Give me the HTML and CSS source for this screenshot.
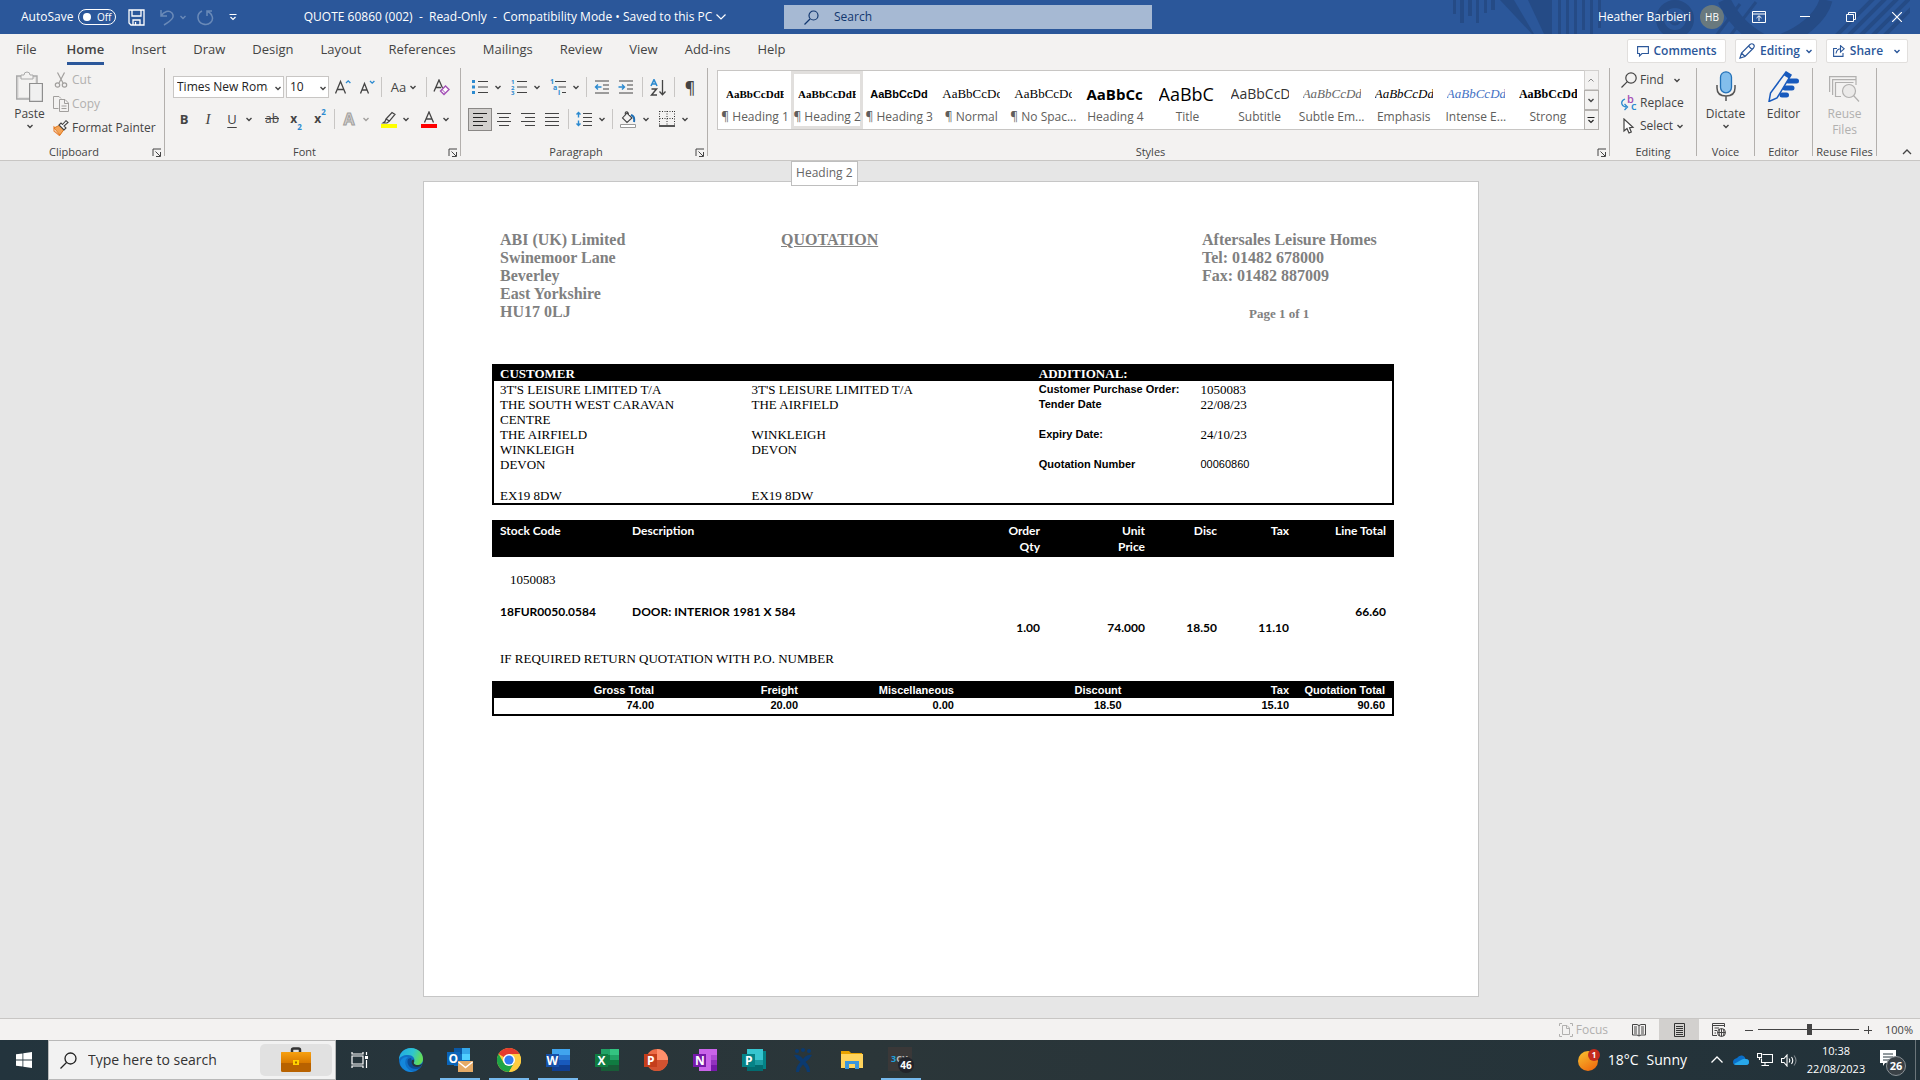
FILE: index.html
```html
<!DOCTYPE html>
<html lang="en">
<head>
    <meta charset="UTF-8">
    <meta name="viewport" content="width=device-width, initial-scale=1.0">
    <title>QUOTE 60860 (002) - Word</title>
    <link rel="stylesheet" href="styles.css">
</head>
<body>
    <svg class="defs" aria-hidden="true">
        <symbol id="chev" viewBox="0 0 8 8"><path d="M1.5 3L4 5.5L6.5 3" fill="none" stroke="currentColor" stroke-width="1.4"/></symbol>
        <symbol id="launch" viewBox="0 0 10 10"><path d="M1 8V1H9M3.500 3.500L8 8M8.500 4V8.500H4" fill="none" stroke="currentColor"/></symbol>
    </svg>

    <!-- Title bar -->
    <header class="titlebar">
        <svg class="titlebar-art" width="480" height="34" viewBox="0 0 480 34" aria-hidden="true">
            <g fill="#254b86">
                <path d="M23 0h3v14h-3zM30 0h4v23h-4zM38 0h4v16h-4zM46 0h3v23h-3zM54 0h3v13h-3zM61 0h4v10h-4z"/>
                <path d="M70 0h14l20 34h-2z"/>
                <path d="M98 0h24v34h-8z"/>
                <path d="M128 0h3v34h-3zM136 0h3v34h-3zM144 0h3v34h-3zM152 0h3v30h-3zM160 0h3v34h-3zM168 0h3v28h-3z"/>
            </g>
            <g fill="none" stroke="#254b86">
                <circle cx="245" cy="19" r="15" stroke-width="8"/>
                <circle cx="245" cy="19" r="5" stroke-width="3"/>
                <path d="M294 0C304 22 322 36 340 44C372 36 392 16 396 0" stroke-width="13"/>
                <path d="M286 36L310 4M300 36L326 2" stroke-width="3"/>
                <path d="M404 38L446 -4M416 38L458 -4M428 38L470 -4M440 38L482 -4M452 38L494 -4" stroke-width="4"/>
            </g>
        </svg>
        <div class="quick">
            <label class="autosave">AutoSave
                <input type="checkbox" class="toggle-input">
                <span class="toggle"><i></i>Off</span>
            </label>
            <button class="tb-btn save" aria-label="Save"><svg width="17" height="17" viewBox="0 0 17 17" fill="none" stroke="#fff" stroke-width="1.300"><path d="M1 1H16V16H3L1 14Z"/><path d="M4 1V7H13V1M5 16V11H12V16M7.500 13V16"/></svg></button>
            <button class="tb-btn dim" aria-label="Undo"><svg width="16" height="17" viewBox="0 0 16 17" fill="none" stroke="currentColor" stroke-width="1.500"><path d="M2 1V7H8M2 7C5 2 10 1 13 4C16 8 13 11 5 16"/></svg></button>
            <button class="tb-caret dim" aria-label="Undo list"><svg width="8" height="8"><use href="#chev"/></svg></button>
            <button class="tb-btn dim" aria-label="Redo"><svg width="17" height="17" viewBox="0 0 17 17" fill="none" stroke="currentColor" stroke-width="1.500"><path d="M5 2C-1 5 0 13 6 15C12 17 17 12 15 7C14 4 12 3 10 2M10 7V2H15"/></svg></button>
            <button class="tb-btn" aria-label="Customize toolbar"><svg width="8" height="8" viewBox="0 0 8 8" fill="none" stroke="#fff" stroke-width="1.200"><path d="M0.500 1.500H7.500M1.500 4L4 6.500L6.500 4"/></svg></button>
        </div>
        <button class="doc-title">QUOTE 60860 (002) &nbsp;-&nbsp; Read-Only &nbsp;-&nbsp; Compatibility Mode • Saved to this PC
            <svg width="10" height="8" viewBox="0 0 10 8" fill="none" stroke="#fff" stroke-width="1.200"><path d="M0.500 1.500L5 6L9.500 1.500"/></svg>
        </button>
        <label class="search">
            <svg width="15" height="15" viewBox="0 0 15 15" fill="none" stroke="#12376f" stroke-width="1.200"><circle cx="9.500" cy="5.500" r="4.500"/><path d="M6 9L0.500 14.500"/></svg>
            <input type="text" placeholder="Search" aria-label="Search">
        </label>
        <div class="account">
            <span>Heather Barbieri</span>
            <span class="avatar">HB</span>
        </div>
        <div class="win-controls">
            <button aria-label="Ribbon display options"><svg width="14" height="12" viewBox="0 0 14 12" fill="none" stroke="#fff"><path d="M0.500 0.500H13.500V11.500H0.500ZM0.500 3H13.500M7 10V5M4.500 7L7 4.700L9.500 7"/></svg></button>
            <button aria-label="Minimize"><svg width="10" height="10"><path d="M0 4.500H10" stroke="#fff"/></svg></button>
            <button aria-label="Restore"><svg width="10" height="10" viewBox="0 0 10 10" fill="none" stroke="#fff"><path d="M0.500 2.500H7.500V9.500H0.500ZM2.500 2.500V0.500H9.500V7.500H7.500"/></svg></button>
            <button aria-label="Close"><svg width="10" height="10" viewBox="0 0 10 10" stroke="#fff" stroke-width="1.200"><path d="M0 0L10 10M10 0L0 10"/></svg></button>
        </div>
    </header>

    <!-- Ribbon tabs -->
    <nav class="tabs">
        <a href="#" class="file">File</a>
        <a href="#" class="active">Home</a>
        <a href="#">Insert</a>
        <a href="#">Draw</a>
        <a href="#">Design</a>
        <a href="#">Layout</a>
        <a href="#">References</a>
        <a href="#">Mailings</a>
        <a href="#">Review</a>
        <a href="#">View</a>
        <a href="#">Add-ins</a>
        <a href="#">Help</a>
        <div class="tab-actions">
            <button class="comments"><svg width="12" height="11" viewBox="0 0 12 11" fill="none" stroke="currentColor" stroke-width="1.100"><path d="M0.600 0.600H11.400V7.500H5L2.500 10V7.500H0.600Z"/></svg>Comments</button>
            <button><svg width="16" height="16" viewBox="0 0 16 16" fill="none" stroke="currentColor" stroke-width="1.200"><path d="M1 15L2.500 10L11 1.500Q13 0 14.500 1.500Q16 3 14.500 5L6 13.500ZM2.500 10L6 13.500M9.500 3L13 6.500"/></svg>Editing<svg width="8" height="8"><use href="#chev"/></svg></button>
            <button class="share"><svg width="12" height="12" viewBox="0 0 12 12" fill="none" stroke="currentColor" stroke-width="1.100"><path d="M4 3.500H0.600V11.400H10V8M3 8.500C3.500 5 5.500 3.800 8 3.800M7.500 0.700L11.200 3.800L7.500 7Z"/></svg>Share<svg class="push" width="8" height="8"><use href="#chev"/></svg></button>
        </div>
    </nav>

    <!-- Ribbon -->
    <div class="ribbon">
        <section class="group clipboard">
            <div class="group-body">
                <button class="big">
                    <svg width="27" height="31" viewBox="0 0 27 31" fill="none"><path d="M0.700 5H21V28H0.700Z" fill="#e3e2e1" stroke="#a9a9a9" stroke-width="1.400"/><path d="M3 7.500H19V26H3Z" fill="#f3f2f1"/><path d="M5 8V4H8Q8 1 11 1Q14 1 14 4H17V8Z" fill="#f3f2f1" stroke="#a9a9a9"/><path d="M13.600 12.500H26.400V30.400H13.600Z" fill="#f0f0f0" stroke="#8e8e8e" stroke-width="1.200"/></svg>
                    Paste
                    <svg width="8" height="8"><use href="#chev"/></svg>
                </button>
                <div class="stack clip-stack">
                    <button disabled><svg width="16" height="16" viewBox="0 0 16 16" fill="none" stroke="#a19f9d" stroke-width="1.200"><path d="M4.500 0.500L10 11M11.500 0.500L6 11"/><circle cx="4.500" cy="13" r="2.200"/><circle cx="11.500" cy="13" r="2.200"/></svg>Cut</button>
                    <button disabled><svg width="16" height="16" viewBox="0 0 16 16" fill="none" stroke="#a19f9d"><path d="M5.500 12.500H0.500V0.500H6L8 2.500M6.500 3.500H12L15.500 7V15.500H6.500ZM11.500 3.500V7.500H15.500M8.500 10H13.500M8.500 12.500H13.500"/></svg>Copy</button>
                    <button><svg width="16" height="16" viewBox="0 0 16 16" fill="none"><path d="M1 7L8 12.500L6.500 15.500L1 11Z" fill="#fff" stroke="#e8833a" stroke-width="1.200"/><path d="M1 8L7 5L11 9.500L7 15Z" fill="#f4a459" stroke="#e07b1f"/><path d="M6 5L11 10L13 8L11 6L15 2.500L13 0.700L9.500 4.500L8 3Z" fill="#fff" stroke="#444" stroke-width="1.100"/></svg>Format Painter</button>
                </div>
            </div>
            <footer>Clipboard<button class="launcher" aria-label="Clipboard options"><svg width="10" height="10"><use href="#launch"/></svg></button></footer>
        </section>

        <section class="group font">
            <div class="group-body rows">
                <div class="row">
                    <span class="combo font-name"><select aria-label="Font"><option>Times New Roman</option></select><svg width="8" height="8"><use href="#chev"/></svg></span>
                    <span class="combo font-size"><select aria-label="Font size"><option>10</option></select><svg width="8" height="8"><use href="#chev"/></svg></span>
                    <button class="ib grow" aria-label="Grow font"><svg width="16" height="16" viewBox="0 0 16 16" fill="none" stroke="#444" stroke-width="1.300"><path d="M0.500 14.500L5.500 2.500L10.500 14.500M2.200 10.500H8.800"/><path d="M11 4L13.200 1.800L15.400 4" stroke="#2b8ad0"/></svg></button>
                    <button class="ib" aria-label="Shrink font"><svg width="16" height="16" viewBox="0 0 16 16" fill="none" stroke="#444" stroke-width="1.300"><path d="M1.500 14.500L5.500 4.500L9.500 14.500M3 11H8"/><path d="M11 2L13.200 4.200L15.400 2" stroke="#2b8ad0"/></svg></button>
                    <i class="sep"></i>
                    <button class="case">Aa<svg width="8" height="8"><use href="#chev"/></svg></button>
                    <i class="sep"></i>
                    <button class="ib" aria-label="Clear formatting"><svg width="17" height="17" viewBox="0 0 17 17" fill="none"><path d="M1 12.500L6 1L9.500 9M2.800 8.500H8" stroke="#444" stroke-width="1.300"/><path d="M7.500 12L12.500 7L16 10.500L11 15.500Z" fill="#fff" stroke="#a34fb5" stroke-width="1.400"/><path d="M9 10.500L12.500 14" stroke="#a34fb5"/></svg></button>
                </div>
                <div class="row">
                    <button class="ib b">B</button>
                    <button class="ib i">I</button>
                    <button class="ib u">U</button>
                    <button class="cb" aria-label="Underline list"><svg width="8" height="8"><use href="#chev"/></svg></button>
                    <button class="ib s">ab</button>
                    <button class="ib x">x<sub>2</sub></button>
                    <button class="ib x">x<sup>2</sup></button>
                    <i class="sep"></i>
                    <button class="ib fx">A</button>
                    <button class="cb off" aria-label="Effects list"><svg width="8" height="8"><use href="#chev"/></svg></button>
                    <button class="ib" aria-label="Highlight"><svg width="16" height="17" viewBox="0 0 16 17" fill="none"><path d="M5 8L11 1.500L14 3.500L8.500 10ZM5 8L4 10.500L2 12H6L8.500 10" stroke="#444" stroke-width="1.200"/><path d="M0 13H16V17H0Z" fill="#ff0"/></svg></button>
                    <button class="cb" aria-label="Highlight list"><svg width="8" height="8"><use href="#chev"/></svg></button>
                    <button class="ib" aria-label="Font colour"><svg width="16" height="17" viewBox="0 0 16 17" fill="none"><path d="M3.500 11.500L8 1L12.500 11.500M5 8H11" stroke="#444" stroke-width="1.300"/><path d="M0 13H16V17H0Z" fill="#f00"/></svg></button>
                    <button class="cb" aria-label="Font colour list"><svg width="8" height="8"><use href="#chev"/></svg></button>
                </div>
            </div>
            <footer>Font<button class="launcher" aria-label="Font options"><svg width="10" height="10"><use href="#launch"/></svg></button></footer>
        </section>

        <section class="group paragraph">
            <div class="group-body rows">
                <div class="row">
                    <button class="ib" aria-label="Bullets"><svg width="16" height="16" viewBox="0 0 16 16"><path d="M0 1h3v3H0zM0 6.500h3v3H0zM0 12h3v3H0z" fill="#2b8ad0"/><path d="M6 2.500H16M6 8H16M6 13.500H16" stroke="#444"/></svg></button>
                    <button class="cb wide" aria-label="Bullets list"><svg width="8" height="8"><use href="#chev"/></svg></button>
                    <button class="ib" aria-label="Numbering"><svg width="16" height="16" viewBox="0 0 16 16"><g fill="#2b8ad0" font-family="Open Sans" font-weight="700" font-size="6"><text x="0" y="5">1</text><text x="0" y="10.500">2</text><text x="0" y="16">3</text></g><path d="M6 2.500H16M6 8H16M6 13.500H16" stroke="#444"/></svg></button>
                    <button class="cb wide" aria-label="Numbering list"><svg width="8" height="8"><use href="#chev"/></svg></button>
                    <button class="ib" aria-label="Multilevel list"><svg width="16" height="16" viewBox="0 0 16 16"><g fill="#2b8ad0" font-family="Open Sans" font-weight="700" font-size="7"><text x="0" y="5">1</text><text x="3" y="10.500">a</text><text x="8" y="16">i</text></g><path d="M5 2.500H16M8.500 8H16M12 13.500H16" stroke="#444"/></svg></button>
                    <button class="cb" aria-label="Multilevel styles"><svg width="8" height="8"><use href="#chev"/></svg></button>
                    <i class="sep"></i>
                    <button class="ib" aria-label="Decrease indent"><svg width="16" height="16" viewBox="0 0 16 16" fill="none" stroke="#444"><path d="M1 2H15M9 6H15M9 10H15M1 14H15"/><path d="M7.500 8H1.500M4 5.500L1.500 8L4 10.500" stroke="#2b8ad0" stroke-width="1.400"/></svg></button>
                    <button class="ib" aria-label="Increase indent"><svg width="16" height="16" viewBox="0 0 16 16" fill="none" stroke="#444"><path d="M1 2H15M9 6H15M9 10H15M1 14H15"/><path d="M0.500 8H6.500M4 5.500L6.500 8L4 10.500" stroke="#2b8ad0" stroke-width="1.400"/></svg></button>
                    <i class="sep"></i>
                    <button class="ib" aria-label="Sort"><svg width="17" height="17" viewBox="0 0 17 17" fill="none"><path d="M1 7L4 0.700L7 7M2 5H6" stroke="#2b8ad0" stroke-width="1.600"/><path d="M1.500 10H6.500L1.500 16H7" stroke="#444" stroke-width="1.500"/><path d="M12.500 1V15.500M9.500 12.500L12.500 15.700L15.500 12.500" stroke="#444" stroke-width="1.300"/></svg></button>
                    <i class="sep"></i>
                    <button class="ib pilcrow">¶</button>
                </div>
                <div class="row">
                    <button class="ib pressed" aria-label="Align left"><svg width="14" height="14" stroke="#222"><path d="M0 1.500H14M0 5.500H10M0 9.500H14M0 13.500H10"/></svg></button>
                    <button class="ib" aria-label="Centre"><svg width="14" height="14" stroke="#444"><path d="M0 1.500H14M2 5.500H12M0 9.500H14M2 13.500H12"/></svg></button>
                    <button class="ib" aria-label="Align right"><svg width="14" height="14" stroke="#444"><path d="M0 1.500H14M4 5.500H14M0 9.500H14M4 13.500H14"/></svg></button>
                    <button class="ib" aria-label="Justify"><svg width="14" height="14" stroke="#444"><path d="M0 1.500H14M0 5.500H14M0 9.500H14M0 13.500H14"/></svg></button>
                    <i class="sep"></i>
                    <button class="ib" aria-label="Line spacing"><svg width="16" height="16" viewBox="0 0 16 16" fill="none" stroke="#444"><path d="M7 2.500H16M7 6.500H16M7 10.500H16M7 14.500H16"/><path d="M2.500 1.500V6.500M2.500 9.500V14.500M0.500 3.500L2.500 1.500L4.500 3.500M0.500 12.500L2.500 14.500L4.500 12.500" stroke="#2b8ad0" stroke-width="1.400"/></svg></button>
                    <button class="cb" aria-label="Spacing list"><svg width="8" height="8"><use href="#chev"/></svg></button>
                    <i class="sep"></i>
                    <button class="ib" aria-label="Shading"><svg width="16" height="17" viewBox="0 0 16 17" fill="none"><path d="M7 2L12 7L7 11.500L2.500 7ZM5.500 4.500Q4.500 0.500 7 0.700Q8.500 1 8.500 4" stroke="#444" stroke-width="1.100"/><path d="M11 4Q15 5 14 11" stroke="#1f6fb5" stroke-width="2"/><path d="M0.500 13.500H15.500V16.500H0.500Z" fill="#fff" stroke="#999"/></svg></button>
                    <button class="cb wide" aria-label="Shading list"><svg width="8" height="8"><use href="#chev"/></svg></button>
                    <button class="ib" aria-label="Borders"><svg width="16" height="16" viewBox="0 0 16 16" fill="none"><path d="M0.500 0.500H15.500M0.500 0V15M15.500 0V15M8 0V15M0.500 7.500H15.500" stroke="#333" stroke-dasharray="1 1.500"/><path d="M0 15H16" stroke="#222" stroke-width="1.500"/></svg></button>
                    <button class="cb wide" aria-label="Borders list"><svg width="8" height="8"><use href="#chev"/></svg></button>
                </div>
            </div>
            <footer>Paragraph<button class="launcher" aria-label="Paragraph options"><svg width="10" height="10"><use href="#launch"/></svg></button></footer>
        </section>

        <section class="group styles">
            <div class="group-body gallery">
                <button class="style"><b class="serif">AaBbCcDdE</b><span>¶ Heading 1</span></button>
                <button class="style current"><b class="serif">AaBbCcDdE</b><span>¶ Heading 2</span><em class="tooltip">Heading 2</em></button>
                <button class="style"><b class="narrow">AaBbCcDdE</b><span>¶ Heading 3</span></button>
                <button class="style"><b class="serif plain">AaBbCcDd</b><span>¶ Normal</span></button>
                <button class="style"><b class="serif plain">AaBbCcDd</b><span>¶ No Spac...</span></button>
                <button class="style"><b class="heading4">AaBbCc</b><span>Heading 4</span></button>
                <button class="style"><b class="title">AaBbC</b><span>Title</span></button>
                <button class="style"><b class="subtitle">AaBbCcD</b><span>Subtitle</span></button>
                <button class="style"><b class="serif italic grey">AaBbCcDd</b><span>Subtle Em...</span></button>
                <button class="style"><b class="serif italic">AaBbCcDd</b><span>Emphasis</span></button>
                <button class="style"><b class="serif italic blue">AaBbCcDd</b><span>Intense E...</span></button>
                <button class="style"><b class="serif strong">AaBbCcDd</b><span>Strong</span></button>
                <div class="gallery-scroll">
                    <button disabled aria-label="Previous styles"><svg width="8" height="8" viewBox="0 0 8 8" fill="none" stroke="#888"><path d="M1.500 5.500L4 3L6.500 5.500"/></svg></button>
                    <button aria-label="Next styles"><svg width="8" height="8"><use href="#chev"/></svg></button>
                    <button aria-label="More styles"><svg width="8" height="8" viewBox="0 0 8 8" fill="none" stroke="#222" stroke-width="1.200"><path d="M0.500 1.500H7.500M1.500 4L4 6.500L6.500 4"/></svg></button>
                </div>
            </div>
            <footer>Styles<button class="launcher" aria-label="Styles options"><svg width="10" height="10"><use href="#launch"/></svg></button></footer>
        </section>

        <section class="group editing">
            <div class="group-body">
                <div class="stack edit-stack">
                    <button><svg width="16" height="16" viewBox="0 0 16 16" fill="none" stroke="#444" stroke-width="1.200"><circle cx="10" cy="6" r="5.200"/><path d="M6.300 9.700L0.500 15.500"/></svg>Find<svg class="far" width="8" height="8"><use href="#chev"/></svg></button>
                    <button><svg width="16" height="16" viewBox="0 0 16 16" fill="none"><g font-family="Open Sans" font-weight="600" font-size="11"><text x="6" y="8" fill="#a34fb5">b</text><text x="10" y="15" fill="#2b8ad0">c</text></g><path d="M4 4C-1 6 0 11 5 12M3.500 9L6.500 12L3.500 15" stroke="#2b8ad0" stroke-width="1.300"/></svg>Replace</button>
                    <button><svg width="16" height="16" viewBox="0 0 16 16" fill="#fff" stroke="#444" stroke-width="1.200"><path d="M3 1V13L6 10.500L8 15L10.300 14L8.500 9.700L12 9.300Z"/></svg>Select<svg width="8" height="8"><use href="#chev"/></svg></button>
                </div>
            </div>
            <footer>Editing</footer>
        </section>

        <section class="group voice">
            <div class="group-body">
                <button class="big">
                    <svg width="20" height="31" viewBox="0 0 20 31" fill="none"><path d="M1 14V17Q1 25 10 25Q19 25 19 17V14M10 25V30" stroke="#555" stroke-width="1.500"/><rect x="4.500" y="0.800" width="11" height="21" rx="5.500" fill="#83beec" stroke="#2372b9" stroke-width="1.300"/></svg>
                    Dictate
                    <svg width="8" height="8"><use href="#chev"/></svg>
                </button>
            </div>
            <footer>Voice</footer>
        </section>

        <section class="group voice">
            <div class="group-body">
                <button class="big">
                    <svg width="31" height="31" viewBox="0 0 31 31"><path d="M20 10H28.500M17 17H24M14 24H18.500" stroke="#185abd" stroke-width="5" stroke-linecap="round"/><path d="M18 1L23 4L9 27L1 30.500L2.500 22Z" fill="#f3f2f1" stroke="#185abd" stroke-width="1.500"/><path d="M18 1L23 4L21 7.500L16 4.500Z" fill="#185abd"/></svg>
                    Editor
                </button>
            </div>
            <footer>Editor</footer>
        </section>

        <section class="group voice">
            <div class="group-body">
                <button class="big" disabled>
                    <svg width="31" height="31" viewBox="0 0 31 31" fill="none" stroke="#b1b0af" stroke-width="1.200"><path d="M0.600 21V5.600H27M3.600 24V8.600H27V14M12 25.500H6.500V11.500H24.500M27 5V8"/><circle cx="20" cy="20" r="6.500" fill="#ebeae9"/><path d="M24.500 24.500L30 30.500"/></svg>
                    Reuse<br>Files
                </button>
            </div>
            <footer class="tight">Reuse Files</footer>
        </section>
        <button class="collapse" aria-label="Collapse ribbon"><svg width="10" height="8" viewBox="0 0 10 8" fill="none" stroke="#444" stroke-width="1.300"><path d="M1 6L5 2L9 6"/></svg></button>
    </div>

    <!-- Document -->
    <main class="workspace">
        <article class="page">
            <div class="letterhead">
                <p>ABI (UK) Limited<br>Swinemoor Lane<br>Beverley<br>East Yorkshire<br>HU17 0LJ</p>
                <h1>QUOTATION</h1>
                <div>
                    <p>Aftersales Leisure Homes<br>Tel: 01482 678000<br>Fax: 01482 887009</p>
                    <p class="page-no">Page 1 of 1</p>
                </div>
            </div>

            <table class="customer">
                <thead>
                    <tr><th class="c1">CUSTOMER</th><th class="c2"></th><th class="c3">ADDITIONAL:</th><th class="c4"></th></tr>
                </thead>
                <tbody>
                    <tr><td>3T'S LEISURE LIMITED T/A</td><td>3T'S LEISURE LIMITED T/A</td><th>Customer Purchase Order:</th><td>1050083</td></tr>
                    <tr><td>THE SOUTH WEST CARAVAN CENTRE</td><td>THE AIRFIELD</td><th>Tender Date</th><td>22/08/23</td></tr>
                    <tr><td>THE AIRFIELD</td><td>WINKLEIGH</td><th>Expiry Date:</th><td>24/10/23</td></tr>
                    <tr><td>WINKLEIGH</td><td>DEVON</td><th></th><td></td></tr>
                    <tr><td>DEVON</td><td></td><th>Quotation Number</th><td class="arial">00060860</td></tr>
                    <tr class="gap-row"><td></td><td></td><th></th><td></td></tr>
                    <tr><td>EX19 8DW</td><td>EX19 8DW</td><th></th><td></td></tr>
                </tbody>
            </table>

            <table class="lines">
                <thead>
                    <tr><th class="code">Stock Code</th><th class="desc">Description</th><th class="qty">Order<br>Qty</th><th class="price">Unit<br>Price</th><th class="disc">Disc</th><th class="disc">Tax</th><th class="total">Line Total</th></tr>
                </thead>
                <tbody>
                    <tr class="ref"><td colspan="7">1050083</td></tr>
                    <tr><td>18FUR0050.0584</td><td>DOOR: INTERIOR 1981 X 584</td><td></td><td></td><td></td><td></td><td>66.60</td></tr>
                    <tr><td></td><td></td><td>1.00</td><td>74.000</td><td>18.50</td><td>11.10</td><td></td></tr>
                </tbody>
            </table>

            <p class="note">IF REQUIRED RETURN QUOTATION WITH P.O. NUMBER</p>

            <table class="totals">
                <thead>
                    <tr><th class="t1">Gross Total</th><th class="t2">Freight</th><th class="t3">Miscellaneous</th><th class="t4">Discount</th><th class="t4">Tax</th><th class="t5">Quotation Total</th></tr>
                </thead>
                <tbody>
                    <tr><td>74.00</td><td>20.00</td><td>0.00</td><td>18.50</td><td>15.10</td><td>90.60</td></tr>
                </tbody>
            </table>
        </article>
    </main>

    <!-- Status bar -->
    <div class="statusbar">
        <button class="focus" disabled><svg width="14" height="14" viewBox="0 0 14 14" fill="none" stroke="#b1b0af"><path d="M3 0.500H0.500V3M11 0.500H13.500V3M0.500 11V13.500H3M13.500 11V13.500H11M3.500 2.500H8L10.500 5V11.500H3.500ZM7.500 2.500V5.500H10.500"/></svg>Focus</button>
        <button class="view" aria-label="Read mode"><svg width="14" height="14" viewBox="0 0 14 14" fill="none" stroke="#444"><path d="M7 2V13M0.500 1.500H5L7 2.500L9 1.500H13.500V12H9L7 13L5 12H0.500ZM2 4H5M2 6H5M2 8H5M2 10H5M9 4H12M9 6H12M9 8H12M9 10H12"/></svg></button>
        <button class="view on" aria-label="Print layout"><svg width="11" height="14" viewBox="0 0 11 14" fill="none" stroke="#333"><path d="M0.500 0.500H10.500V13.500H0.500ZM2 3.500H9M2 5.500H9M2 7.500H9M2 9.500H9M2 11.500H9"/></svg></button>
        <button class="view" aria-label="Web layout"><svg width="14" height="14" viewBox="0 0 14 14" fill="none" stroke="#444"><path d="M5 12.500H0.500V0.500H12.500V4M0.500 2.500H12.500M2.500 5H7M2.500 7.500H5M2.500 10H4"/><circle cx="9.500" cy="9.500" r="4"/><path d="M5.500 9.500H13.500M9.500 5.500V13.500M7.500 6Q6.500 9.500 7.500 13M11.500 6Q12.500 9.500 11.500 13"/></svg></button>
        <div class="zoom">
            <button aria-label="Zoom out"><svg width="8" height="8"><path d="M0 4.500H8" stroke="#444"/></svg></button>
            <input type="range" min="0" max="100" value="51" aria-label="Zoom">
            <button aria-label="Zoom in"><svg width="8" height="8"><path d="M0 4.500H8M4.500 0V8" stroke="#444"/></svg></button>
            <span>100%</span>
        </div>
    </div>

    <!-- Taskbar -->
    <div class="taskbar">
        <button class="start" aria-label="Start"><svg width="16" height="16" viewBox="0 0 16 16" fill="#fff"><path d="M0 2.300L6.500 1.400V7.600H0ZM7.300 1.300L16 0V7.600H7.300ZM0 8.400H6.500V14.600L0 13.700ZM7.300 8.400H16V16L7.300 14.700Z"/></svg></button>
        <label class="os-search">
            <svg width="17" height="17" viewBox="0 0 17 17" fill="none" stroke="#222" stroke-width="1.300"><circle cx="10.500" cy="6.500" r="5.500"/><path d="M6.500 10.500L0.500 16.500"/></svg>
            <input type="text" placeholder="Type here to search" aria-label="Type here to search">
            <span class="pill"><svg width="30" height="26" viewBox="0 0 30 26"><defs><linearGradient id="case" x2="0" y2="1"><stop offset="0" stop-color="#f7a010"/><stop offset="1" stop-color="#d97a00"/></linearGradient></defs><path d="M11 5V3Q11 1.500 12.500 1.500H17.500Q19 1.500 19 3V5" fill="none" stroke="#333" stroke-width="2.500"/><rect y="5" width="30" height="20" rx="1.500" fill="#b86200"/><path d="M0 6Q0 5 1 5H29Q30 5 30 6V16H0Z" fill="url(#case)"/><rect x="12" y="13" width="6" height="5" fill="#ffd000"/><rect x="14" y="14.500" width="2" height="2" fill="#a06500"/></svg></span>
        </label>
        <div class="apps">
            <button aria-label="Task view"><svg width="18" height="16" viewBox="0 0 18 16" fill="none" stroke="#fff" stroke-width="1.200"><path d="M1 4H12V12H1ZM1 0V2H12V0M1 16V14H12V16M15.500 0V3M15.500 8V16"/><path d="M14 4H17V7H14Z" fill="#fff" stroke="none"/></svg></button>
            <button aria-label="Edge"><svg width="24" height="24" viewBox="0 0 24 24"><defs><linearGradient id="edge" x2="1" y2="0.300"><stop offset="0" stop-color="#1fa6e8"/><stop offset="0.600" stop-color="#2fc5cf"/><stop offset="1" stop-color="#62dc5a"/></linearGradient></defs><circle cx="12" cy="12" r="12" fill="#0f6fc6"/><path d="M0 12C0 5 5 0 12 0C19 0 24 5 24 11C24 15 21 17 18 17C15 17 14 15.500 15 14C16.500 12 15 7 9 7C4 7 0.500 9 0 12Z" fill="url(#edge)"/><path d="M8 10C4 14 7 23 15 23.500C10 25 2 22 1 15C2 10 5 9 9 9Z" fill="#1487dc"/><path d="M9 11C7 16 11 21 17 21C20 21 22 19 22.500 18C19 20 13 18 12.500 14C12.400 12 13 10 11.500 10Z" fill="#0c4b95"/><path d="M12.500 14.500C13.500 19 18 20 22 18L25 13C24 16.500 20 17.500 17 17C15 16.500 14.300 15 15 14C15.400 13 15 12 14.500 11.500C13 11.500 12.300 13 12.500 14.500Z" fill="#25343c"/></svg></button>
            <button class="running" aria-label="Outlook"><svg width="28" height="26" viewBox="0 0 28 26"><path d="M8 1H24V19H8Z" fill="#0f6cbd"/><path d="M8 1H16V7H8Z" fill="#0a58a5"/><path d="M16 1H24V7H16Z" fill="#35a8ea"/><path d="M16 7H24V13H16Z" fill="#50d0ff"/><path d="M1 5H14V18H1Z" fill="#0a64b8"/><text x="2.500" y="15.500" class="glyph">O</text><path d="M12 14H27V25H12Z" fill="#e5aa66"/><path d="M12.500 15L19.500 20.500L26.500 15" fill="none" stroke="#fff" stroke-width="1.500"/></svg></button>
            <button class="running" aria-label="Chrome"><svg width="24" height="24" viewBox="0 0 24 24"><circle cx="12" cy="12" r="12" fill="#ffcd40"/><path d="M12 12L1.600 6A12 12 0 0 1 22.400 6H12Z" fill="#e33b2e"/><path d="M1.600 6A12 12 0 0 0 12 24L17.200 15L12 12L6.800 15Z" fill="#1ea446"/><path d="M12 24A12 12 0 0 0 22.400 6H12L17.200 15Z" fill="#ffcd40"/><circle cx="12" cy="12" r="6" fill="#fff"/><circle cx="12" cy="12" r="4.600" fill="#2f7cf0"/></svg></button>
            <button class="running" aria-label="Word"><svg width="24" height="22" viewBox="0 0 24 22"><path d="M6 0H24V6H6Z" fill="#41a5ee"/><path d="M6 6H24V11H6Z" fill="#2b7cd3"/><path d="M6 11H24V16H6Z" fill="#185abd"/><path d="M6 16H24V22H6Z" fill="#103f91"/><path d="M0 5H13V18H0Z" fill="#1650a8"/><text x="0.500" y="15.500" class="glyph">W</text></svg></button>
            <button aria-label="Excel"><svg width="24" height="22" viewBox="0 0 24 22"><path d="M6 0H24V22H6Z" fill="#21a366"/><path d="M15 0H24V6H15Z" fill="#33c481"/><path d="M6 6H15V16H6Z" fill="#107c41"/><path d="M15 11H24V16H15Z" fill="#107c41"/><path d="M6 16H24V22H6Z" fill="#185c37"/><path d="M0 5H13V18H0Z" fill="#107c41"/><text x="2.500" y="15.500" class="glyph">X</text></svg></button>
            <button aria-label="PowerPoint"><svg width="24" height="22" viewBox="0 0 24 22"><circle cx="13" cy="11" r="11" fill="#ed6c47"/><path d="M13 0A11 11 0 0 1 24 11H13Z" fill="#ff8f6b"/><path d="M2 11H24A11 11 0 0 1 2 11Z" fill="#d35230"/><path d="M0 5H13V18H0Z" fill="#c43e1c"/><text x="3" y="15.500" class="glyph">P</text></svg></button>
            <button aria-label="OneNote"><svg width="24" height="22" viewBox="0 0 24 22"><path d="M6 0H24V22H6Z" fill="#ca64ea"/><path d="M18 6H24V11H18Z" fill="#ae4bd5"/><path d="M18 11H24V16H18Z" fill="#9332bf"/><path d="M18 16H24V22H18Z" fill="#7719aa"/><path d="M0 5H13V18H0Z" fill="#7719aa"/><text x="2" y="15.500" class="glyph">N</text></svg></button>
            <button aria-label="Publisher"><svg width="24" height="22" viewBox="0 0 24 22"><path d="M18 2H24V20H18Z" fill="#038387"/><path d="M5 0H21V22H5Z" fill="#1a9ba1"/><path d="M5 0H21V11H13V7H5Z" fill="#37c6d0"/><path d="M5 16H21V22H5Z" fill="#036c70"/><path d="M0 5H13V18H0Z" fill="#058387"/><text x="3" y="15.500" class="glyph">P</text></svg></button>
            <button aria-label="Jira"><svg width="20" height="24" viewBox="0 0 20 24" fill="#0b3a70"><circle cx="4" cy="3" r="2"/><circle cx="10" cy="2" r="2"/><circle cx="16" cy="3" r="2"/><path d="M1 7Q6 6 10 11Q14 6 19 7Q17 11 12.500 14Q17 18 17 24H14Q13 19 10 16.500Q7 19 6 24H3Q3 18 7.500 14Q3 11 1 7Z"/></svg></button>
            <button aria-label="File Explorer"><svg width="22" height="18" viewBox="0 0 22 18"><path d="M0 0H8L10 2H21V6H0Z" fill="#e8a200"/><path d="M0 3H22V17H0Z" fill="#ffd35c"/><path d="M4 10H18V18H14V13H8V18H4Z" fill="#3a96dd"/></svg></button>
            <button class="running" aria-label="3CX"><svg width="26" height="26" viewBox="0 0 26 26"><rect width="24" height="24" fill="#3a3838"/><text x="3" y="15" class="mini"><tspan fill="#1ea0dc">3</tspan><tspan fill="#bbb">CX</tspan></text><circle cx="18" cy="18" r="8" fill="#22242b"/><text x="18" y="21.500" class="count">46</text></svg></button>
        </div>
        <div class="tray">
            <button class="weather">
                <svg width="24" height="24" viewBox="0 0 24 24"><defs><linearGradient id="sun" x2="0.600" y2="1"><stop offset="0" stop-color="#f8c331"/><stop offset="1" stop-color="#f07010"/></linearGradient></defs><circle cx="10" cy="13" r="10" fill="url(#sun)"/><circle cx="16" cy="7" r="6" fill="#c42b1c"/><text x="16" y="10" class="badge">1</text></svg>
                <span>18°C</span><span>Sunny</span>
            </button>
            <button class="t24" aria-label="Hidden icons"><svg width="12" height="8" viewBox="0 0 12 8" fill="none" stroke="#fff" stroke-width="1.300"><path d="M0.500 6.500L6 1L11.500 6.500"/></svg></button>
            <button class="t24" aria-label="OneDrive"><svg width="16" height="11" viewBox="0 0 16 11"><path d="M4 3Q6 0 9 0.500Q12 1 12.500 4Q16 4 16 7Q16 10 13 10H3Q0 10 0 7Q0 4 4 3Z" fill="#0a6fc8"/><path d="M1 9L9 4.500Q11 3.500 12.500 4Q16 4 16 7Q16 10 13 10H3Q1.800 10 1 9Z" fill="#28a8ea"/></svg></button>
            <button class="t24" aria-label="Network"><svg width="16" height="14" viewBox="0 0 16 14" fill="none" stroke="#fff" stroke-width="1.100"><path d="M5.500 1.500H15.500V9.500H4.500V5.500M8 9.500V12.500M4.500 12.500H12M0.500 0.500H4.500V4.500H0.500ZM2.500 4.500V7"/></svg></button>
            <button class="t24" aria-label="Volume"><svg width="17" height="13" viewBox="0 0 17 13" fill="none" stroke="#fff" stroke-width="1.100"><path d="M0.500 4.500H3L6 1V12L3 8.500H0.500ZM8 4.500Q9.500 6.500 8 8.500M10.500 3Q13 6.500 10.500 10"/><path d="M13 1.500Q17 6.500 13 11.500" stroke="#7d868b"/></svg></button>
            <button class="clock"><span>10:38</span><span>22/08/2023</span></button>
            <button class="notify" aria-label="26 notifications"><svg width="28" height="28" viewBox="0 0 28 28"><path d="M1 2H17V15H6L4 18V15H1Z" fill="#fff"/><path d="M4 6H14M4 9H14M4 12H10" stroke="#25343c"/><circle cx="17" cy="18" r="9.500" fill="#3a4146" stroke="#8a9196"/><text x="17" y="22" class="count big-count">26</text></svg></button>
            <i class="show-desktop"></i>
        </div>
    </div>
</body>
</html>
```
FILE: styles.css
```css
* {
    box-sizing: border-box;
}
body {
    margin: 0;
    min-height: 100vh;
    display: flex;
    flex-direction: column;
    font-family: "Open Sans", "Noto Sans", sans-serif;
    font-size: 12px;
    line-height: 16px;
    color: #444;
    background: #e6e6e6;
}
.defs {
    position: absolute;
    width: 0;
    height: 0;
}
button {
    display: flex;
    align-items: center;
    justify-content: center;
    margin: 0;
    padding: 0;
    border: none;
    background: none;
    font: inherit;
    color: inherit;
    white-space: nowrap;
}
button:disabled {
    color: #b1b0af;
}
svg {
    flex: none;
}
p, h1 {
    margin: 0;
}

/* Title bar */
.titlebar {
    position: relative;
    display: flex;
    align-items: center;
    height: 34px;
    color: #fff;
    background: #2b579a;
}
.titlebar > * {
    position: relative;
}
.titlebar .titlebar-art {
    position: absolute;
    top: 0;
    right: 10px;
}
.quick {
    display: flex;
    align-items: center;
    width: 310px;
    padding-left: 21px;
}
.autosave {
    display: flex;
    align-items: center;
    gap: 5px;
    margin-right: 6px;
}
.toggle-input {
    position: absolute;
    opacity: 0;
}
.toggle {
    display: flex;
    align-items: center;
    gap: 6px;
    width: 38px;
    height: 16px;
    padding: 0 4px;
    border: 1px solid #fff;
    border-radius: 8px;
    font-size: 10px;
}
.toggle i {
    width: 8px;
    height: 8px;
    border-radius: 50%;
    background: #fff;
}
.tb-btn {
    width: 28px;
    height: 24px;
}
.tb-btn.save {
    margin-right: 3px;
}
.tb-caret {
    width: 12px;
    margin-left: -4px;
    margin-right: 2px;
}
.dim {
    color: #6a8ab8;
}
.doc-title {
    gap: 4px;
    width: 410px;
    font-size: 12px;
}
.search {
    display: flex;
    align-items: center;
    gap: 15px;
    width: 368px;
    height: 24px;
    margin-left: 64px;
    padding-left: 20px;
    background: #a6b9d3;
}
.search input, .os-search input {
    flex: 1;
    min-width: 0;
    padding: 0;
    border: none;
    background: none;
    font: inherit;
}
.search input::placeholder {
    color: #12376f;
    opacity: 1;
}
.account {
    display: flex;
    align-items: center;
    gap: 9px;
    margin-left: auto;
    margin-right: 12px;
}
.avatar {
    width: 24px;
    height: 24px;
    border-radius: 50%;
    background: #69797e;
    font-size: 10px;
    line-height: 24px;
    text-align: center;
}
.win-controls {
    display: flex;
}
.win-controls button {
    width: 46px;
    height: 32px;
}

/* Tabs */
.tabs {
    display: flex;
    align-items: center;
    height: 34px;
    background: #f3f2f1;
    font-size: 13px;
}
.tabs a {
    margin: 0 14px 0 13px;
    color: #444;
    text-decoration: none;
    line-height: 18px;
    padding: 3px 0 4px;
    border-bottom: 3px solid transparent;
}
.tabs .file {
    margin: 0 17px 0 16px;
}
.tabs .active {
    font-weight: 600;
    border-bottom-color: #2b579a;
}
.tab-actions {
    display: flex;
    gap: 9px;
    margin-left: auto;
    margin-right: 12px;
}
.tab-actions button {
    gap: 5px;
    min-width: 82px;
    height: 24px;
    border: 1px solid #e1dfdd;
    border-radius: 2px;
    background: #fff;
    color: #2b579a;
    font-weight: 600;
    font-size: 12px;
}
.tab-actions .comments {
    min-width: 99px;
}
.push {
    margin-left: 5px;
}

/* Ribbon */
.ribbon {
    position: relative;
    z-index: 1;
    display: flex;
    height: 93px;
    padding-bottom: 4px;
    border-bottom: 1px solid #c8c6c4;
    background: #f3f2f1;
}
.group {
    display: flex;
    flex-direction: column;
    border-right: 1px solid #b3b0ad;
}
.group-body {
    display: flex;
    flex: 1;
    min-height: 0;
}
.group footer {
    position: relative;
    height: 16px;
    margin-top: auto;
    margin-bottom: -4px;
    font-size: 11px;
    line-height: 16px;
    text-align: center;
}
.launcher {
    position: absolute;
    right: 2px;
    top: 4px;
}
.clipboard {
    width: 165px;
}
.clipboard footer {
    padding-right: 16px;
}
.font {
    width: 296px;
}
.font footer, .paragraph footer {
    padding-right: 16px;
}
.paragraph {
    width: 247px;
}
.styles {
    flex: 1;
    min-width: 0;
}
.styles footer {
    padding-right: 16px;
}
.editing {
    width: 87px;
}
.voice {
    width: 58px;
}
.voice:nth-last-child(2) {
    width: 64px;
}
.group footer.tight {
    white-space: nowrap;
}
.big {
    flex-direction: column;
    justify-content: flex-start;
    width: 100%;
    padding-top: 3px;
}
.big svg:first-child {
    margin-bottom: 4px;
}
.clipboard .big {
    width: 57px;
    padding-left: 2px;
}
.stack {
    display: flex;
    flex-direction: column;
    align-items: flex-start;
}
.stack button {
    gap: 3px;
    height: 24px;
}
.clip-stack {
    margin-left: -4px;
}
.edit-stack {
    padding-left: 11px;
}
.edit-stack button {
    height: 23px;
}
.far {
    margin-left: 6px;
}
.rows {
    flex-direction: column;
    gap: 10px;
    padding: 8px 0 0 7px;
}
.row {
    display: flex;
    align-items: center;
    height: 22px;
}
.combo {
    position: relative;
    margin: 0 2px 0 1px;
}
.combo select {
    appearance: none;
    width: 100%;
    height: 22px;
    padding: 0 15px 0 3px;
    border: 1px solid #c8c6c4;
    border-radius: 0;
    background: #fff;
    color: #222;
    font: inherit;
}
.combo svg {
    position: absolute;
    right: 2px;
    top: 8px;
}
.font-name {
    width: 111px;
}
.font-size {
    width: 43px;
    margin: 0;
}
.ib {
    width: 24px;
    height: 23px;
}
.grow {
    margin-left: 2px;
}
.cb {
    width: 12px;
    height: 22px;
}
.cb + .ib {
    margin-left: 5px;
}
.paragraph .cb + .ib {
    margin-left: 2px;
}
.cb.wide {
    width: 14px;
}
.font .cb, .paragraph .cb.wide {
    margin-left: -1px;
}
.off {
    color: #a19f9d;
}
.sep {
    width: 1px;
    height: 20px;
    margin: 0 2px;
    background: #c8c6c4;
}
.paragraph .sep {
    margin: 0 3px 0 4px;
}
.case {
    gap: 3px;
    width: 40px;
    font-size: 13px;
}
.b {
    font-weight: 700;
    font-size: 13px;
}
.i {
    font-family: "Liberation Serif", serif;
    font-style: italic;
    font-size: 15px;
}
.u {
    text-decoration: underline;
    text-underline-offset: 3px;
    font-size: 13px;
}
.s {
    text-decoration: line-through;
}
.x {
    font-weight: 700;
}
.x sub, .x sup {
    font-size: 8px;
    line-height: 8px;
    color: #2b8ad0;
}
.x sub {
    align-self: flex-end;
}
.x sup {
    align-self: flex-start;
}
.fx {
    font-size: 16px;
    font-weight: 700;
    color: #d4d2d0;
    -webkit-text-stroke: 1px #a19f9d;
}
.pilcrow {
    font-size: 16px;
    font-weight: 600;
}
.pressed {
    border: 1px solid #8a8886;
    background: #d2d0ce;
}

/* Style gallery */
.gallery {
    flex: none;
    height: 60px;
    margin: 2px 10px 0 9px;
    padding-left: 1px;
    border: 1px solid #c8c6c4;
    background: #fff;
}
.style {
    position: relative;
    flex: 1;
    flex-direction: column;
    min-width: 0;
    padding: 0 2px;
    color: #605e5c;
}
.style b {
    width: 58px;
    overflow: hidden;
    height: 24px;
    margin: 6px 0 3px;
    font-size: 13px;
    line-height: 24px;
    text-align: left;
    color: #000;
    font-weight: 400;
}
.style .serif {
    font-family: "Liberation Serif", serif;
    font-weight: 700;
    font-size: 11px;
}
.style .plain, .style .italic {
    font-size: 13px;
    font-weight: 400;
}
.style .italic {
    font-style: italic;
}
.style .grey {
    color: #666;
}
.style .blue {
    color: #4472c4;
}
.style .strong {
    font-size: 12px;
}
.style .narrow {
    font-family: "Liberation Sans Narrow", "Liberation Sans", sans-serif;
    font-weight: 700;
    font-size: 11px;
}
.style .heading4 {
    font-weight: 700;
    font-size: 15px;
}
.style .title {
    font-size: 18px;
}
.style .subtitle {
    font-size: 14px;
    color: #333;
}
.current {
    box-shadow: inset 0 0 0 3px #e1dfdd;
}
.tooltip {
    position: absolute;
    left: 0;
    top: 90px;
    padding: 3px 4px 4px;
    border: 1px solid #bebebe;
    background: #fff;
    color: #666;
    font-style: normal;
}
.gallery-scroll {
    display: flex;
    flex-direction: column;
    width: 15px;
    margin: -1px -1px -1px 0;
}
.gallery-scroll button {
    flex: 1;
    border: 1px solid #b3b0ad;
    background: #f3f2f1;
}
.gallery-scroll button:disabled {
    border-color: #d2d0ce;
}
.collapse {
    width: 43px;
    align-self: flex-end;
    padding-left: 16px;
}

/* Document */
.workspace {
    flex: 1;
    padding: 20px 18px 20px 0;
}
.page {
    max-width: 1056px;
    min-height: 816px;
    margin: 0 auto;
    padding: 49px 84px 40px 68px;
    border: 1px solid #c6c6c6;
    background: #fff;
    color: #000;
    font-family: "Liberation Serif", "Times New Roman", serif;
    font-size: 13px;
    line-height: 15px;
}
.letterhead {
    display: grid;
    grid-template-columns: 281fr 421fr 192fr;
    height: 133px;
    padding-left: 8px;
    color: #808080;
    font-size: 16px;
    font-weight: 700;
    line-height: 18px;
}
.letterhead h1 {
    font-size: 16px;
    text-decoration: underline;
}
.letterhead .page-no {
    margin: 20px 0 0 47px;
    font-size: 13px;
}
table {
    width: 100%;
    table-layout: fixed;
    border-spacing: 0;
}
td, th {
    padding: 0 8px;
    text-align: left;
    vertical-align: top;
}
thead {
    background: #000;
    color: #fff;
}
.customer {
    border: 2px solid #000;
    border-top: none;
}
.customer td, .customer th {
    height: 15px;
    padding: 0 6px;
}
.customer thead th {
    height: 17px;
    padding-top: 2px;
}
.customer tbody tr:first-child > *, .customer .gap-row > * {
    height: 16px;
    padding-top: 1px;
}
.customer tbody th, .customer .arial, .totals {
    font-family: "Liberation Sans Narrow", "Liberation Sans", Arial, sans-serif;
    font-size: 11px;
    white-space: nowrap;
}
.customer td:first-child {
    padding-right: 40px;
}
.c1 {
    width: 28%;
}
.c2 {
    width: 32%;
}
.c3 {
    width: 18%;
}
.c4 {
    width: 22%;
}
.lines {
    margin-top: 15px;
    font-family: Lato, "Open Sans", sans-serif;
    font-size: 12px;
    font-weight: 700;
    line-height: 16px;
}
.lines thead th {
    height: 37px;
    padding-top: 3px;
    padding-bottom: 2px;
}
.lines td:nth-child(n+3), .lines th:nth-child(n+3) {
    text-align: right;
}
.lines .ref td {
    padding: 15px 18px 16px;
    font-family: "Liberation Serif", serif;
    font-size: 13px;
    font-weight: 400;
}
.lines td {
    height: 16px;
}
.code {
    width: 132px;
}
.qty {
    width: 84px;
}
.price {
    width: 105px;
}
.disc {
    width: 72px;
}
.total {
    width: 97px;
}
.note {
    margin: 15px 8px;
}
.totals {
    border: 2px solid #000;
    border-top: none;
    font-weight: 700;
}
.totals th, .totals td {
    padding: 0 7px;
    text-align: right;
}
.totals thead th {
    height: 17px;
    padding-top: 2px;
}
.totals td {
    height: 16px;
}
.t1 {
    width: 167px;
}
.t2 {
    width: 144px;
}
.t3 {
    width: 156px;
}
.t5 {
    width: 96px;
}

/* Status bar */
.statusbar {
    display: flex;
    justify-content: flex-end;
    height: 22px;
    border-top: 1px solid #c8c6c4;
    background: #f3f2f1;
}
.focus {
    gap: 3px;
    margin-right: 11px;
}
.view {
    width: 40px;
}
.view.on {
    background: #d2d0ce;
}
.zoom {
    display: flex;
    align-items: center;
    margin: 0 7px 0 6px;
}
.zoom input {
    appearance: none;
    width: 101px;
    height: 14px;
    margin: 0 5px;
    background: linear-gradient(#444, #444) center / 100% 1px no-repeat;
}
.zoom input::-webkit-slider-thumb {
    appearance: none;
    width: 5px;
    height: 11px;
    background: #444;
}
.zoom span {
    width: 41px;
    text-align: right;
    font-size: 11px;
}

/* Taskbar */
.taskbar {
    display: flex;
    height: 40px;
    background: linear-gradient(90deg, #23343d, #2b3639 45%, #22323a);
    color: #fff;
}
.start {
    width: 48px;
}
.os-search {
    display: flex;
    align-items: center;
    gap: 11px;
    width: 288px;
    padding: 0 3px 0 11px;
    border: 1px solid #b9b9b9;
    background: #f2f2f2;
    font-size: 14px;
}
.os-search input::placeholder {
    color: #333;
    opacity: 1;
}
.pill {
    display: flex;
    align-items: center;
    justify-content: center;
    width: 72px;
    height: 32px;
    border-radius: 5px;
    background: #e1e1e1;
}
.apps {
    display: flex;
}
.apps button {
    width: 40px;
    margin-right: 9px;
}
.apps button:first-child {
    margin-left: 4px;
    margin-right: 11px;
}
.running {
    box-shadow: inset 0 -2px #76b9ed;
}
.glyph, .mini, .count, .badge {
    font-family: "Open Sans", sans-serif;
    font-weight: 700;
    font-size: 12px;
    fill: #fff;
}
.mini {
    font-size: 9px;
}
.count {
    font-size: 10px;
    text-anchor: middle;
}
.big-count {
    font-size: 11px;
}
.badge {
    font-size: 8px;
    text-anchor: middle;
}
.tray {
    display: flex;
    margin-left: auto;
}
.weather {
    gap: 8px;
    margin-right: 18px;
    font-size: 14px;
}
.weather svg {
    margin-right: -2px;
}
.t24 {
    width: 24px;
}
.clock {
    flex-direction: column;
    width: 70px;
    font-size: 11px;
    line-height: 18px;
}
.notify {
    width: 44px;
    padding-top: 4px;
}
.show-desktop {
    width: 5px;
    border-left: 1px solid #6b757a;
}
```
